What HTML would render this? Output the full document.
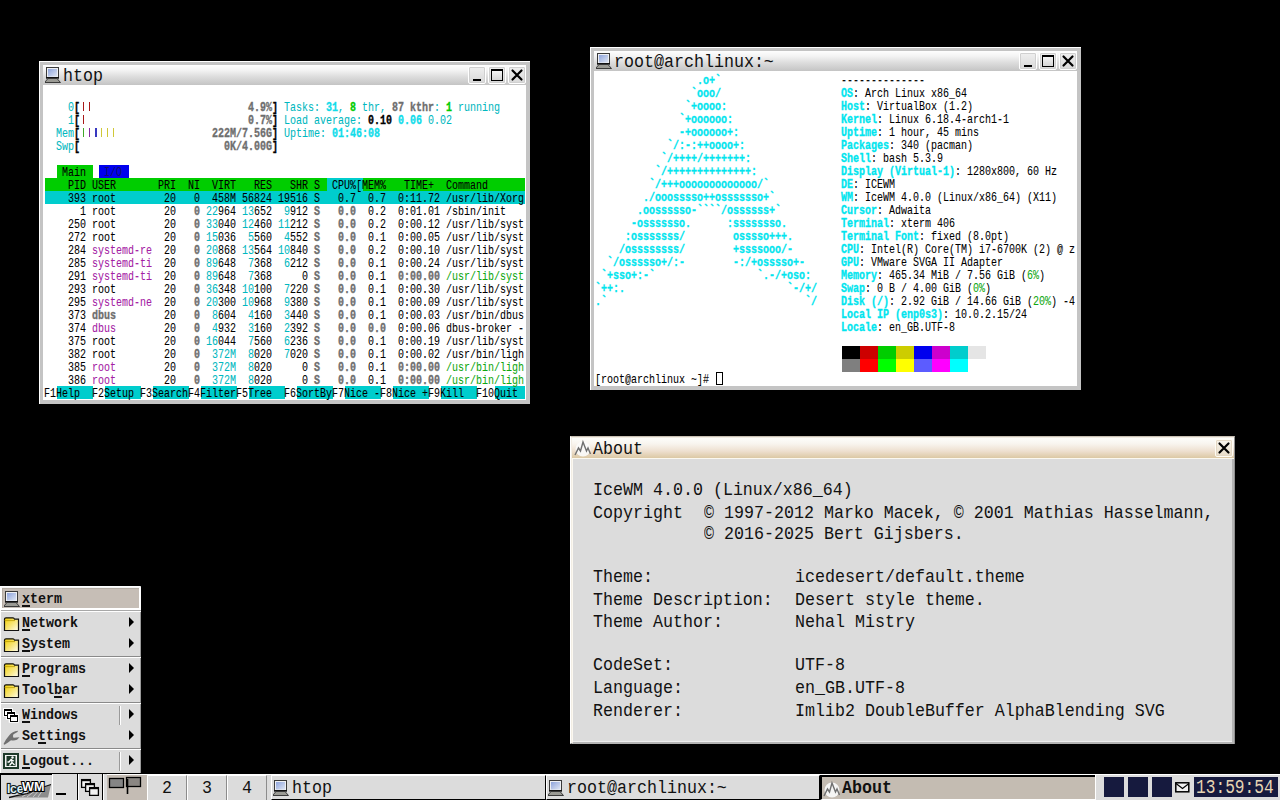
<!DOCTYPE html>
<html><head><meta charset="utf-8"><style>
*{margin:0;padding:0;box-sizing:border-box}
html,body{width:1280px;height:800px;overflow:hidden;background:#000}
body{position:relative;font-family:"Liberation Mono",monospace}
.abs{position:absolute}
.term{position:absolute}
.tr{position:absolute;left:0;white-space:pre;font-family:"Liberation Mono",monospace;font-size:13.333px;line-height:13px;height:13px;transform:scaleX(0.75);transform-origin:0 0;color:#000}
.win{position:absolute;background:#c4c4c4;border-top:1px solid #fff;border-left:1px solid #fff}
.ttl{position:absolute;left:3px;top:3px;height:20px;background:linear-gradient(#fefefe 0%,#f4f4f4 25%,#dcdcdc 60%,#c4c4c4 100%)}
.ttxt{position:absolute;top:2px;white-space:pre;font-family:"Liberation Mono",monospace;font-size:18.5px;line-height:20px;transform:scaleX(0.9);transform-origin:0 0;color:#111}
.cont{position:absolute;left:3px;top:23px;background:#fff;overflow:hidden}
.btn{position:absolute;top:1px;width:18px;height:18px;border:1px solid #fff;border-radius:2px;background:linear-gradient(#f0f0f0,#d8d8d8);box-shadow:inset 0 0 0 1px #d0d0d0}
.mono{white-space:pre;font-family:"Liberation Mono",monospace}
.bg{position:absolute;height:13px}
.tr{top:0;margin-top:1px;margin-left:-0.7px}
.about{position:absolute;left:0;top:0}
.al{position:absolute;left:22px;white-space:pre;font-family:"Liberation Mono",monospace;font-size:18.5px;line-height:20px;transform:scaleX(0.9);transform-origin:0 0;color:#111}
.mi{position:absolute;left:21px;white-space:pre;font-family:"Liberation Mono",monospace;font-weight:bold;font-size:15px;line-height:20px;transform:scaleX(0.889);transform-origin:0 0;color:#111}
.mi u{text-decoration:underline;text-decoration-thickness:2px;text-underline-offset:2px}
.arr{position:absolute;left:128px;width:0;height:0;border-top:5px solid transparent;border-bottom:5px solid transparent;border-left:5.5px solid #000}
.msep{position:absolute;left:0;width:140px;height:2px;border-top:1px solid #8a8a8a;border-bottom:1px solid #fff}
.tb{position:absolute;top:0;height:26px}
.tbt{position:absolute;white-space:pre;font-family:"Liberation Mono",monospace;font-size:18.5px;line-height:20px;transform:scaleX(0.9);transform-origin:0 0;color:#111}
.tr{-webkit-text-stroke:0.08px currentColor}
.dbtn{background:linear-gradient(#f8f4ec,#e8dcc8);box-shadow:inset 0 0 0 1px #e4d8c4;border-color:#fffcf4}

</style></head><body>
<!-- htop window -->
<div class="win" style="left:39px;top:61px;width:491px;height:343px">
  <div class="ttl" style="width:483px">
    <svg width="16" height="16" viewBox="0 0 16 16" style="position:absolute;left:2px;top:2px"><defs><linearGradient id="scrh" x1="0" y1="0" x2="1" y2="1"><stop offset="0" stop-color="#8ea4dc"/><stop offset="1" stop-color="#dfe6f4"/></linearGradient></defs><rect x="1.5" y="0.5" width="12" height="10.5" fill="#eef0f4" stroke="#3a3a3a"/><rect x="3" y="2" width="9" height="7.5" fill="url(#scrh)"/><rect x="1" y="10" width="13" height="1.5" fill="#111"/><polygon points="3,11.5 12,11.5 15.5,15.5 -0.5,15.5" fill="#9a9a94" stroke="#3a3a3a" stroke-width="1"/></svg>
    <div class="ttxt" style="left:20px">htop</div>
    <div class="btn" style="left:425px"><div class="abs" style="left:4px;top:12px;width:8px;height:2px;background:#000"></div></div><div class="btn" style="left:445px"><div class="abs" style="left:2px;top:2px;width:12px;height:12px;border:1.5px solid #000;border-top-width:2.5px;background:linear-gradient(#f4f4f4,#d4d4d4)"></div></div><div class="btn" style="left:465px"><svg width="16" height="16" style="position:absolute;left:0;top:0"><path d="M3.5,3.5 L12.5,12.5 M12.5,3.5 L3.5,12.5" stroke="#000" stroke-width="2.2" stroke-linecap="round"/></svg></div>
  </div>
  <div class="cont" style="width:483px;height:315px"><div class="term" style="left:2px;top:2px"><div class="bg" style="left:38px;top:15px;width:1px;height:9px;background:#a81818"></div><div class="bg" style="left:44px;top:15px;width:1px;height:9px;background:#a81818"></div><div class="bg" style="left:38px;top:28px;width:1px;height:9px;background:#a81818"></div><div class="bg" style="left:38px;top:41px;width:1px;height:9px;background:#40a828"></div><div class="bg" style="left:44px;top:41px;width:1px;height:9px;background:#8828a0"></div><div class="bg" style="left:50px;top:41px;width:2px;height:9px;background:#3838c0"></div><div class="bg" style="left:56px;top:41px;width:1px;height:9px;background:#d0c838"></div><div class="bg" style="left:62px;top:41px;width:1px;height:9px;background:#d0c838"></div><div class="bg" style="left:68px;top:41px;width:1px;height:9px;background:#d0c838"></div><div class="bg" style="left:12px;top:78px;width:36px;background:#00cd00"></div><div class="bg" style="left:54px;top:78px;width:30px;background:#0000ee"></div><div class="bg" style="left:0px;top:91px;width:282px;background:#00cd00"></div><div class="bg" style="left:282px;top:91px;width:36px;background:#00cdcd"></div><div class="bg" style="left:318px;top:91px;width:162px;background:#00cd00"></div><div class="bg" style="left:0px;top:104px;width:480px;background:#00cdcd"></div><div class="bg" style="left:12px;top:299px;width:36px;background:#00cdcd"></div><div class="bg" style="left:60px;top:299px;width:36px;background:#00cdcd"></div><div class="bg" style="left:108px;top:299px;width:36px;background:#00cdcd"></div><div class="bg" style="left:156px;top:299px;width:36px;background:#00cdcd"></div><div class="bg" style="left:204px;top:299px;width:36px;background:#00cdcd"></div><div class="bg" style="left:252px;top:299px;width:36px;background:#00cdcd"></div><div class="bg" style="left:300px;top:299px;width:36px;background:#00cdcd"></div><div class="bg" style="left:348px;top:299px;width:36px;background:#00cdcd"></div><div class="bg" style="left:396px;top:299px;width:36px;background:#00cdcd"></div><div class="bg" style="left:450px;top:299px;width:30px;background:#00cdcd"></div><div class="tr" style="top:13px"><span style="color:#00b8c0">    0</span><span style="font-weight:bold;-webkit-text-stroke:0.35px currentColor">[</span>                            <span style="color:#6e6e6e;font-weight:bold;-webkit-text-stroke:0.35px currentColor">4.9%</span><span style="font-weight:bold;-webkit-text-stroke:0.35px currentColor">]</span><span style="color:#00b8c0"> Tasks: </span><span style="color:#10dcea;font-weight:bold;-webkit-text-stroke:0.35px currentColor">31</span><span style="color:#00b8c0">, </span><span style="color:#00cd00;font-weight:bold;-webkit-text-stroke:0.35px currentColor">8</span><span style="color:#00b8c0"> thr, </span><span style="color:#6e6e6e;font-weight:bold;-webkit-text-stroke:0.35px currentColor">87 kthr</span><span style="color:#00b8c0">: </span><span style="color:#00cd00;font-weight:bold;-webkit-text-stroke:0.35px currentColor">1</span><span style="color:#00b8c0"> running</span></div><div class="tr" style="top:26px"><span style="color:#00b8c0">    1</span><span style="font-weight:bold;-webkit-text-stroke:0.35px currentColor">[</span>                            <span style="color:#6e6e6e;font-weight:bold;-webkit-text-stroke:0.35px currentColor">0.7%</span><span style="font-weight:bold;-webkit-text-stroke:0.35px currentColor">]</span><span style="color:#00b8c0"> Load average: </span><span style="font-weight:bold;-webkit-text-stroke:0.35px currentColor">0.10 </span><span style="color:#10dcea;font-weight:bold;-webkit-text-stroke:0.35px currentColor">0.06 </span><span style="color:#00b8c0">0.02</span></div><div class="tr" style="top:39px"><span style="color:#00b8c0">  Mem</span><span style="font-weight:bold;-webkit-text-stroke:0.35px currentColor">[</span>                      <span style="color:#6e6e6e;font-weight:bold;-webkit-text-stroke:0.35px currentColor">222M/7.56G</span><span style="font-weight:bold;-webkit-text-stroke:0.35px currentColor">]</span><span style="color:#00b8c0"> Uptime: </span><span style="color:#10dcea;font-weight:bold;-webkit-text-stroke:0.35px currentColor">01:46:08</span></div><div class="tr" style="top:52px"><span style="color:#00b8c0">  Swp</span><span style="font-weight:bold;-webkit-text-stroke:0.35px currentColor">[</span>                        <span style="color:#6e6e6e;font-weight:bold;-webkit-text-stroke:0.35px currentColor">0K/4.00G</span><span style="font-weight:bold;-webkit-text-stroke:0.35px currentColor">]</span></div><div class="tr" style="top:78px">   Main  <span style="color:#101070"> I/O </span></div><div class="tr" style="top:91px">    PID USER       PRI  NI  VIRT   RES   SHR S  CPU%[MEM%   TIME+  Command      </div><div class="tr" style="top:104px">    393 root        20   0  458M 56824 19516 S   0.7  0.7  0:11.72 /usr/lib/Xorg</div><div class="tr" style="top:117px">      1 root        20 <span style="color:#6e6e6e;font-weight:bold;-webkit-text-stroke:0.35px currentColor">  0</span> <span style="color:#00b8c0">22</span>964 <span style="color:#00b8c0">13</span>652  <span style="color:#00b8c0">9</span>912 <span style="color:#6e6e6e;font-weight:bold;-webkit-text-stroke:0.35px currentColor">S</span> <span style="color:#6e6e6e;font-weight:bold;-webkit-text-stroke:0.35px currentColor">  0.0</span>  0.2  0:01.01 /sbin/init</div><div class="tr" style="top:130px">    250 root        20 <span style="color:#6e6e6e;font-weight:bold;-webkit-text-stroke:0.35px currentColor">  0</span> <span style="color:#00b8c0">33</span>040 <span style="color:#00b8c0">12</span>460 <span style="color:#00b8c0">11</span>212 <span style="color:#6e6e6e;font-weight:bold;-webkit-text-stroke:0.35px currentColor">S</span> <span style="color:#6e6e6e;font-weight:bold;-webkit-text-stroke:0.35px currentColor">  0.0</span>  0.2  0:00.12 /usr/lib/syst</div><div class="tr" style="top:143px">    272 root        20 <span style="color:#6e6e6e;font-weight:bold;-webkit-text-stroke:0.35px currentColor">  0</span> <span style="color:#00b8c0">15</span>036  <span style="color:#00b8c0">5</span>560  <span style="color:#00b8c0">4</span>552 <span style="color:#6e6e6e;font-weight:bold;-webkit-text-stroke:0.35px currentColor">S</span> <span style="color:#6e6e6e;font-weight:bold;-webkit-text-stroke:0.35px currentColor">  0.0</span>  0.1  0:00.05 /usr/lib/syst</div><div class="tr" style="top:156px">    284 <span style="color:#a420a4">systemd-re</span>  20 <span style="color:#6e6e6e;font-weight:bold;-webkit-text-stroke:0.35px currentColor">  0</span> <span style="color:#00b8c0">20</span>868 <span style="color:#00b8c0">13</span>564 <span style="color:#00b8c0">10</span>840 <span style="color:#6e6e6e;font-weight:bold;-webkit-text-stroke:0.35px currentColor">S</span> <span style="color:#6e6e6e;font-weight:bold;-webkit-text-stroke:0.35px currentColor">  0.0</span>  0.2  0:00.10 /usr/lib/syst</div><div class="tr" style="top:169px">    285 <span style="color:#a420a4">systemd-ti</span>  20 <span style="color:#6e6e6e;font-weight:bold;-webkit-text-stroke:0.35px currentColor">  0</span> <span style="color:#00b8c0">89</span>648  <span style="color:#00b8c0">7</span>368  <span style="color:#00b8c0">6</span>212 <span style="color:#6e6e6e;font-weight:bold;-webkit-text-stroke:0.35px currentColor">S</span> <span style="color:#6e6e6e;font-weight:bold;-webkit-text-stroke:0.35px currentColor">  0.0</span>  0.1  0:00.24 /usr/lib/syst</div><div class="tr" style="top:182px">    291 <span style="color:#a420a4">systemd-ti</span>  20 <span style="color:#6e6e6e;font-weight:bold;-webkit-text-stroke:0.35px currentColor">  0</span> <span style="color:#00b8c0">89</span>648  <span style="color:#00b8c0">7</span>368     0 <span style="color:#6e6e6e;font-weight:bold;-webkit-text-stroke:0.35px currentColor">S</span> <span style="color:#6e6e6e;font-weight:bold;-webkit-text-stroke:0.35px currentColor">  0.0</span>  0.1 <span style="color:#6e6e6e;font-weight:bold;-webkit-text-stroke:0.35px currentColor"> 0:00.00</span> <span style="color:#10a810">/usr/lib/syst</span></div><div class="tr" style="top:195px">    293 root        20 <span style="color:#6e6e6e;font-weight:bold;-webkit-text-stroke:0.35px currentColor">  0</span> <span style="color:#00b8c0">36</span>348 <span style="color:#00b8c0">10</span>100  <span style="color:#00b8c0">7</span>220 <span style="color:#6e6e6e;font-weight:bold;-webkit-text-stroke:0.35px currentColor">S</span> <span style="color:#6e6e6e;font-weight:bold;-webkit-text-stroke:0.35px currentColor">  0.0</span>  0.1  0:00.30 /usr/lib/syst</div><div class="tr" style="top:208px">    295 <span style="color:#a420a4">systemd-ne</span>  20 <span style="color:#6e6e6e;font-weight:bold;-webkit-text-stroke:0.35px currentColor">  0</span> <span style="color:#00b8c0">20</span>300 <span style="color:#00b8c0">10</span>968  <span style="color:#00b8c0">9</span>380 <span style="color:#6e6e6e;font-weight:bold;-webkit-text-stroke:0.35px currentColor">S</span> <span style="color:#6e6e6e;font-weight:bold;-webkit-text-stroke:0.35px currentColor">  0.0</span>  0.1  0:00.09 /usr/lib/syst</div><div class="tr" style="top:221px">    373 <span style="color:#6e6e6e;font-weight:bold;-webkit-text-stroke:0.35px currentColor">dbus      </span>  20 <span style="color:#6e6e6e;font-weight:bold;-webkit-text-stroke:0.35px currentColor">  0</span>  <span style="color:#00b8c0">8</span>604  <span style="color:#00b8c0">4</span>160  <span style="color:#00b8c0">3</span>440 <span style="color:#6e6e6e;font-weight:bold;-webkit-text-stroke:0.35px currentColor">S</span> <span style="color:#6e6e6e;font-weight:bold;-webkit-text-stroke:0.35px currentColor">  0.0</span>  0.1  0:00.03 /usr/bin/dbus</div><div class="tr" style="top:234px">    374 <span style="color:#a420a4">dbus      </span>  20 <span style="color:#6e6e6e;font-weight:bold;-webkit-text-stroke:0.35px currentColor">  0</span>  <span style="color:#00b8c0">4</span>932  <span style="color:#00b8c0">3</span>160  <span style="color:#00b8c0">2</span>392 <span style="color:#6e6e6e;font-weight:bold;-webkit-text-stroke:0.35px currentColor">S</span> <span style="color:#6e6e6e;font-weight:bold;-webkit-text-stroke:0.35px currentColor">  0.0</span> <span style="color:#6e6e6e;font-weight:bold;-webkit-text-stroke:0.35px currentColor"> 0.0</span>  0:00.06 dbus-broker -</div><div class="tr" style="top:247px">    375 root        20 <span style="color:#6e6e6e;font-weight:bold;-webkit-text-stroke:0.35px currentColor">  0</span> <span style="color:#00b8c0">16</span>044  <span style="color:#00b8c0">7</span>560  <span style="color:#00b8c0">6</span>236 <span style="color:#6e6e6e;font-weight:bold;-webkit-text-stroke:0.35px currentColor">S</span> <span style="color:#6e6e6e;font-weight:bold;-webkit-text-stroke:0.35px currentColor">  0.0</span>  0.1  0:00.19 /usr/lib/syst</div><div class="tr" style="top:260px">    382 root        20 <span style="color:#6e6e6e;font-weight:bold;-webkit-text-stroke:0.35px currentColor">  0</span>  <span style="color:#00b8c0">372M</span>  <span style="color:#00b8c0">8</span>020  <span style="color:#00b8c0">7</span>020 <span style="color:#6e6e6e;font-weight:bold;-webkit-text-stroke:0.35px currentColor">S</span> <span style="color:#6e6e6e;font-weight:bold;-webkit-text-stroke:0.35px currentColor">  0.0</span>  0.1  0:00.02 /usr/bin/ligh</div><div class="tr" style="top:273px">    385 <span style="color:#a420a4">root      </span>  20 <span style="color:#6e6e6e;font-weight:bold;-webkit-text-stroke:0.35px currentColor">  0</span>  <span style="color:#00b8c0">372M</span>  <span style="color:#00b8c0">8</span>020     0 <span style="color:#6e6e6e;font-weight:bold;-webkit-text-stroke:0.35px currentColor">S</span> <span style="color:#6e6e6e;font-weight:bold;-webkit-text-stroke:0.35px currentColor">  0.0</span>  0.1 <span style="color:#6e6e6e;font-weight:bold;-webkit-text-stroke:0.35px currentColor"> 0:00.00</span> <span style="color:#10a810">/usr/bin/ligh</span></div><div class="tr" style="top:286px">    386 <span style="color:#a420a4">root      </span>  20 <span style="color:#6e6e6e;font-weight:bold;-webkit-text-stroke:0.35px currentColor">  0</span>  <span style="color:#00b8c0">372M</span>  <span style="color:#00b8c0">8</span>020     0 <span style="color:#6e6e6e;font-weight:bold;-webkit-text-stroke:0.35px currentColor">S</span> <span style="color:#6e6e6e;font-weight:bold;-webkit-text-stroke:0.35px currentColor">  0.0</span>  0.1 <span style="color:#6e6e6e;font-weight:bold;-webkit-text-stroke:0.35px currentColor"> 0:00.00</span> <span style="color:#10a810">/usr/bin/ligh</span></div><div class="tr" style="top:299px">F1Help  F2Setup F3SearchF4FilterF5Tree  F6SortByF7Nice -F8Nice +F9Kill  F10Quit </div></div></div>
</div>
<!-- xterm window -->
<div class="win" style="left:590px;top:47px;width:491px;height:343px">
  <div class="ttl" style="width:483px">
    <svg width="16" height="16" viewBox="0 0 16 16" style="position:absolute;left:2px;top:2px"><defs><linearGradient id="scrx" x1="0" y1="0" x2="1" y2="1"><stop offset="0" stop-color="#8ea4dc"/><stop offset="1" stop-color="#dfe6f4"/></linearGradient></defs><rect x="1.5" y="0.5" width="12" height="10.5" fill="#eef0f4" stroke="#3a3a3a"/><rect x="3" y="2" width="9" height="7.5" fill="url(#scrx)"/><rect x="1" y="10" width="13" height="1.5" fill="#111"/><polygon points="3,11.5 12,11.5 15.5,15.5 -0.5,15.5" fill="#9a9a94" stroke="#3a3a3a" stroke-width="1"/></svg>
    <div class="ttxt" style="left:20px">root@archlinux:~</div>
    <div class="btn" style="left:425px"><div class="abs" style="left:4px;top:12px;width:8px;height:2px;background:#000"></div></div><div class="btn" style="left:445px"><div class="abs" style="left:2px;top:2px;width:12px;height:12px;border:1.5px solid #000;border-top-width:2.5px;background:linear-gradient(#f4f4f4,#d4d4d4)"></div></div><div class="btn" style="left:465px"><svg width="16" height="16" style="position:absolute;left:0;top:0"><path d="M3.5,3.5 L12.5,12.5 M12.5,3.5 L3.5,12.5" stroke="#000" stroke-width="2.2" stroke-linecap="round"/></svg></div>
  </div>
  <div class="cont" style="width:483px;height:315px"><div class="term" style="left:2px;top:2px"><div class="bg" style="left:246px;top:273px;width:18px;background:#000000"></div><div class="bg" style="left:264px;top:273px;width:18px;background:#cd0000"></div><div class="bg" style="left:282px;top:273px;width:18px;background:#00cd00"></div><div class="bg" style="left:300px;top:273px;width:18px;background:#cdcd00"></div><div class="bg" style="left:318px;top:273px;width:18px;background:#0000ee"></div><div class="bg" style="left:336px;top:273px;width:18px;background:#cd00cd"></div><div class="bg" style="left:354px;top:273px;width:18px;background:#00cdcd"></div><div class="bg" style="left:372px;top:273px;width:18px;background:#e5e5e5"></div><div class="bg" style="left:246px;top:286px;width:18px;background:#7f7f7f"></div><div class="bg" style="left:264px;top:286px;width:18px;background:#ff0000"></div><div class="bg" style="left:282px;top:286px;width:18px;background:#00ff00"></div><div class="bg" style="left:300px;top:286px;width:18px;background:#ffff00"></div><div class="bg" style="left:318px;top:286px;width:18px;background:#5c5cff"></div><div class="bg" style="left:336px;top:286px;width:18px;background:#ff00ff"></div><div class="bg" style="left:354px;top:286px;width:18px;background:#00ffff"></div><div class="bg" style="left:372px;top:286px;width:18px;background:#ffffff"></div><div class="tr" style="top:0px"><span style="color:#00e5ee;font-weight:bold;-webkit-text-stroke:0.35px currentColor">                 .o+`                    </span>--------------</div><div class="tr" style="top:13px"><span style="color:#00e5ee;font-weight:bold;-webkit-text-stroke:0.35px currentColor">                `ooo/                    </span><span style="color:#00e5ee;font-weight:bold;-webkit-text-stroke:0.35px currentColor">OS</span>: Arch Linux x86_64</div><div class="tr" style="top:26px"><span style="color:#00e5ee;font-weight:bold;-webkit-text-stroke:0.35px currentColor">               `+oooo:                   </span><span style="color:#00e5ee;font-weight:bold;-webkit-text-stroke:0.35px currentColor">Host</span>: VirtualBox (1.2)</div><div class="tr" style="top:39px"><span style="color:#00e5ee;font-weight:bold;-webkit-text-stroke:0.35px currentColor">              `+oooooo:                  </span><span style="color:#00e5ee;font-weight:bold;-webkit-text-stroke:0.35px currentColor">Kernel</span>: Linux 6.18.4-arch1-1</div><div class="tr" style="top:52px"><span style="color:#00e5ee;font-weight:bold;-webkit-text-stroke:0.35px currentColor">              -+oooooo+:                 </span><span style="color:#00e5ee;font-weight:bold;-webkit-text-stroke:0.35px currentColor">Uptime</span>: 1 hour, 45 mins</div><div class="tr" style="top:65px"><span style="color:#00e5ee;font-weight:bold;-webkit-text-stroke:0.35px currentColor">            `/:-:++oooo+:                </span><span style="color:#00e5ee;font-weight:bold;-webkit-text-stroke:0.35px currentColor">Packages</span>: 340 (pacman)</div><div class="tr" style="top:78px"><span style="color:#00e5ee;font-weight:bold;-webkit-text-stroke:0.35px currentColor">           `/++++/+++++++:               </span><span style="color:#00e5ee;font-weight:bold;-webkit-text-stroke:0.35px currentColor">Shell</span>: bash 5.3.9</div><div class="tr" style="top:91px"><span style="color:#00e5ee;font-weight:bold;-webkit-text-stroke:0.35px currentColor">          `/++++++++++++++:              </span><span style="color:#00e5ee;font-weight:bold;-webkit-text-stroke:0.35px currentColor">Display (Virtual-1)</span>: 1280x800, 60 Hz</div><div class="tr" style="top:104px"><span style="color:#00e5ee;font-weight:bold;-webkit-text-stroke:0.35px currentColor">         `/+++ooooooooooooo/`            </span><span style="color:#00e5ee;font-weight:bold;-webkit-text-stroke:0.35px currentColor">DE</span>: ICEWM</div><div class="tr" style="top:117px"><span style="color:#00e5ee;font-weight:bold;-webkit-text-stroke:0.35px currentColor">        ./ooosssso++osssssso+`           </span><span style="color:#00e5ee;font-weight:bold;-webkit-text-stroke:0.35px currentColor">WM</span>: IceWM 4.0.0 (Linux/x86_64) (X11)</div><div class="tr" style="top:130px"><span style="color:#00e5ee;font-weight:bold;-webkit-text-stroke:0.35px currentColor">       .oossssso-````/ossssss+`          </span><span style="color:#00e5ee;font-weight:bold;-webkit-text-stroke:0.35px currentColor">Cursor</span>: Adwaita</div><div class="tr" style="top:143px"><span style="color:#00e5ee;font-weight:bold;-webkit-text-stroke:0.35px currentColor">      -osssssso.      :ssssssso.         </span><span style="color:#00e5ee;font-weight:bold;-webkit-text-stroke:0.35px currentColor">Terminal</span>: xterm 406</div><div class="tr" style="top:156px"><span style="color:#00e5ee;font-weight:bold;-webkit-text-stroke:0.35px currentColor">     :osssssss/        osssso+++.        </span><span style="color:#00e5ee;font-weight:bold;-webkit-text-stroke:0.35px currentColor">Terminal Font</span>: fixed (8.0pt)</div><div class="tr" style="top:169px"><span style="color:#00e5ee;font-weight:bold;-webkit-text-stroke:0.35px currentColor">    /ossssssss/        +ssssooo/-        </span><span style="color:#00e5ee;font-weight:bold;-webkit-text-stroke:0.35px currentColor">CPU</span>: Intel(R) Core(TM) i7-6700K (2) @ z</div><div class="tr" style="top:182px"><span style="color:#00e5ee;font-weight:bold;-webkit-text-stroke:0.35px currentColor">  `/ossssso+/:-        -:/+osssso+-      </span><span style="color:#00e5ee;font-weight:bold;-webkit-text-stroke:0.35px currentColor">GPU</span>: VMware SVGA II Adapter</div><div class="tr" style="top:195px"><span style="color:#00e5ee;font-weight:bold;-webkit-text-stroke:0.35px currentColor"> `+sso+:-`                 `.-/+oso:     </span><span style="color:#00e5ee;font-weight:bold;-webkit-text-stroke:0.35px currentColor">Memory</span>: 465.34 MiB / 7.56 GiB (<span style="color:#10a810">6%</span>)</div><div class="tr" style="top:208px"><span style="color:#00e5ee;font-weight:bold;-webkit-text-stroke:0.35px currentColor">`++:.                           `-/+/    </span><span style="color:#00e5ee;font-weight:bold;-webkit-text-stroke:0.35px currentColor">Swap</span>: 0 B / 4.00 GiB (<span style="color:#10a810">0%</span>)</div><div class="tr" style="top:221px"><span style="color:#00e5ee;font-weight:bold;-webkit-text-stroke:0.35px currentColor">.`                                 `/    </span><span style="color:#00e5ee;font-weight:bold;-webkit-text-stroke:0.35px currentColor">Disk (/)</span>: 2.92 GiB / 14.66 GiB (<span style="color:#10a810">20%</span>) -4</div><div class="tr" style="top:234px">                                         <span style="color:#00e5ee;font-weight:bold;-webkit-text-stroke:0.35px currentColor">Local IP (enp0s3)</span>: 10.0.2.15/24</div><div class="tr" style="top:247px">                                         <span style="color:#00e5ee;font-weight:bold;-webkit-text-stroke:0.35px currentColor">Locale</span>: en_GB.UTF-8</div><div class="tr" style="top:273px">                                                                 </div><div class="tr" style="top:286px">                                                                 </div><div class="tr" style="top:299px">[root@archlinux ~]# </div><div class="bg" style="left:120px;top:299px;width:7px;height:13px;border:1px solid #000"></div></div></div>
</div>
<!-- About window -->
<div class="abs" style="left:570px;top:436px;width:665px;height:308px;background:#f2ede4;border-top:1px solid #c8c0b4;border-left:1px solid #fff;border-right:1px solid #909090;border-bottom:1px solid #909090">
  <div class="abs" style="left:1px;top:1px;width:662px;height:20px;background:linear-gradient(#fdfdfb 0%,#f8f4ee 30%,#eee0d0 65%,#dcc8a4 100%)">
    <svg width="18" height="18" viewBox="0 0 18 18" style="position:absolute;left:2px;top:1px"><circle cx="9" cy="10" r="7.5" fill="#fbfbfb" opacity="0.9"/><polyline points="1,16 4.5,9 6.5,12 9,3 12.5,12 14,9 16.5,15" fill="none" stroke="#707070" stroke-width="1.4"/></svg>
    <div class="ttxt" style="left:21px">About</div>
    <div class="btn dbtn" style="left:643px;top:1px"><svg width="16" height="16" style="position:absolute;left:0;top:0"><path d="M3.5,3.5 L12.5,12.5 M12.5,3.5 L3.5,12.5" stroke="#000" stroke-width="2.2" stroke-linecap="round"/></svg></div>
  </div>
  <div class="abs" style="left:1px;top:21px;width:662px;height:1px;background:#fbf8f0"></div>
  <div class="abs" style="left:1px;top:22px;width:662px;height:285px;background:#dcdcdc;border-left:1px solid #fbf8f0;border-right:2px solid #b4b4b4;border-bottom:2px solid #b4b4b4;box-shadow:inset 0 -1px 0 #ececec"></div>
  <div class="about"><div class="al" style="top:44px">IceWM 4.0.0 (Linux/x86_64)</div><div class="al" style="top:67px">Copyright  </div><div class="al" style="top:67px;left:133px">© 1997-2012 Marko Macek, © 2001 Mathias Hasselmann,</div><div class="al" style="top:88px;left:133px">© 2016-2025 Bert Gijsbers.</div><div class="al" style="top:131px">Theme:</div><div class="al" style="top:131px;left:224px">icedesert/default.theme</div><div class="al" style="top:154px">Theme Description:</div><div class="al" style="top:154px;left:224px">Desert style theme.</div><div class="al" style="top:176px">Theme Author:</div><div class="al" style="top:176px;left:224px">Nehal Mistry</div><div class="al" style="top:219px">CodeSet:</div><div class="al" style="top:219px;left:224px">UTF-8</div><div class="al" style="top:242px">Language:</div><div class="al" style="top:242px;left:224px">en_GB.UTF-8</div><div class="al" style="top:265px">Renderer:</div><div class="al" style="top:265px;left:224px">Imlib2 DoubleBuffer AlphaBlending SVG</div>
  </div>
</div>
<!-- start menu -->
<div class="abs" style="left:0;top:586px;width:141px;height:187px;background:#dcdcdc;border-top:1px solid #fff;border-left:1px solid #fff;border-right:1px solid #9a9a9a">
  <div class="abs" style="left:0;top:0;width:140px;height:23px;background:#c6beb6;border-style:solid;border-color:#f4f4f4 #fff #fff #fff;border-width:1px 2px 2px 1px;box-shadow:inset 1px 1px 0 #b4aca4"></div><div class="abs" style="left:0;top:23px;width:140px;height:2px;border-top:1px solid #a8a8a8;border-bottom:1px solid #fff"></div>
  <div class="mi" style="top:3px"><u>x</u>term</div><svg width="16" height="16" viewBox="0 0 16 16" style="position:absolute;left:3px;top:4px"><defs><linearGradient id="scrm" x1="0" y1="0" x2="1" y2="1"><stop offset="0" stop-color="#8ea4dc"/><stop offset="1" stop-color="#dfe6f4"/></linearGradient></defs><rect x="1.5" y="0.5" width="12" height="10.5" fill="#eef0f4" stroke="#3a3a3a"/><rect x="3" y="2" width="9" height="7.5" fill="url(#scrm)"/><rect x="1" y="10" width="13" height="1.5" fill="#111"/><polygon points="3,11.5 12,11.5 15.5,15.5 -0.5,15.5" fill="#9a9a94" stroke="#3a3a3a" stroke-width="1"/></svg><div class="mi" style="top:27px"><u>N</u>etwork</div><svg width="17" height="15" viewBox="0 0 17 15" style="position:absolute;left:2px;top:30px"><defs><linearGradient id="fgn" x1="0" y1="0" x2="1" y2="1"><stop offset="0" stop-color="#f4d000"/><stop offset="0.6" stop-color="#f8e888"/><stop offset="1" stop-color="#fffef0"/></linearGradient></defs><path d="M1.5,3.5 L1.5,2 Q1.5,0.8 3,0.8 L10,0.8 Q11,0.8 11.6,2.2 L15.5,2.2 L15.5,13.5 L1.5,13.5 Z" fill="url(#fgn)" stroke="#111" stroke-width="1.2"/><line x1="1.5" y1="3.6" x2="12" y2="3.6" stroke="#b89a00" stroke-width="0.8"/></svg><div class="arr" style="top:30px"></div><div class="mi" style="top:48px"><u>S</u>ystem</div><svg width="17" height="15" viewBox="0 0 17 15" style="position:absolute;left:2px;top:51px"><defs><linearGradient id="fgs" x1="0" y1="0" x2="1" y2="1"><stop offset="0" stop-color="#f4d000"/><stop offset="0.6" stop-color="#f8e888"/><stop offset="1" stop-color="#fffef0"/></linearGradient></defs><path d="M1.5,3.5 L1.5,2 Q1.5,0.8 3,0.8 L10,0.8 Q11,0.8 11.6,2.2 L15.5,2.2 L15.5,13.5 L1.5,13.5 Z" fill="url(#fgs)" stroke="#111" stroke-width="1.2"/><line x1="1.5" y1="3.6" x2="12" y2="3.6" stroke="#b89a00" stroke-width="0.8"/></svg><div class="arr" style="top:51px"></div><div class="msep" style="top:69px"></div><div class="mi" style="top:73px"><u>P</u>rograms</div><svg width="17" height="15" viewBox="0 0 17 15" style="position:absolute;left:2px;top:76px"><defs><linearGradient id="fgp" x1="0" y1="0" x2="1" y2="1"><stop offset="0" stop-color="#f4d000"/><stop offset="0.6" stop-color="#f8e888"/><stop offset="1" stop-color="#fffef0"/></linearGradient></defs><path d="M1.5,3.5 L1.5,2 Q1.5,0.8 3,0.8 L10,0.8 Q11,0.8 11.6,2.2 L15.5,2.2 L15.5,13.5 L1.5,13.5 Z" fill="url(#fgp)" stroke="#111" stroke-width="1.2"/><line x1="1.5" y1="3.6" x2="12" y2="3.6" stroke="#b89a00" stroke-width="0.8"/></svg><div class="arr" style="top:76px"></div><div class="mi" style="top:94px">Tool<u>b</u>ar</div><svg width="17" height="15" viewBox="0 0 17 15" style="position:absolute;left:2px;top:97px"><defs><linearGradient id="fgt" x1="0" y1="0" x2="1" y2="1"><stop offset="0" stop-color="#f4d000"/><stop offset="0.6" stop-color="#f8e888"/><stop offset="1" stop-color="#fffef0"/></linearGradient></defs><path d="M1.5,3.5 L1.5,2 Q1.5,0.8 3,0.8 L10,0.8 Q11,0.8 11.6,2.2 L15.5,2.2 L15.5,13.5 L1.5,13.5 Z" fill="url(#fgt)" stroke="#111" stroke-width="1.2"/><line x1="1.5" y1="3.6" x2="12" y2="3.6" stroke="#b89a00" stroke-width="0.8"/></svg><div class="arr" style="top:97px"></div><div class="msep" style="top:115px"></div><div class="mi" style="top:119px"><u>W</u>indows</div><svg width="16" height="15" viewBox="0 0 16 15" style="position:absolute;left:2px;top:121px"><rect x="0.5" y="0.5" width="8.5" height="7.5" fill="#fff" stroke="#fff" stroke-width="1.5"/><rect x="3.5" y="3.5" width="8.5" height="7.5" fill="#fff" stroke="#fff" stroke-width="1.5"/><rect x="6.5" y="6.5" width="8.5" height="7.5" fill="#fff" stroke="#fff" stroke-width="1.5"/><rect x="1.5" y="1.5" width="7" height="6" fill="#fff" stroke="#000" stroke-width="1"/><rect x="1" y="1" width="8" height="2" fill="#000"/><rect x="4.5" y="4.5" width="7" height="6" fill="#fff" stroke="#000" stroke-width="1"/><rect x="4" y="4" width="8" height="2" fill="#000"/><rect x="7.5" y="7.5" width="7" height="6" fill="#fff" stroke="#000" stroke-width="1"/><rect x="7" y="7" width="8" height="2" fill="#000"/></svg><div class="arr" style="top:122px"></div><div class="abs" style="left:118px;top:119px;width:2px;height:19px;border-left:1px solid #9a9a9a;border-right:1px solid #fff"></div><div class="mi" style="top:140px">Se<u>t</u>tings</div><svg width="18" height="16" viewBox="0 0 18 16" style="position:absolute;left:2px;top:143px"><path d="M0.5,14 L3,9.5 L6.5,5 Q9,1.5 15,0.7 L14.5,2 L10.5,4.2 Q9.3,5.8 10.5,7.8 L16.5,7.3 L14,9.8 Q11,11 8,10.3 L5,12.5 L1.5,14.8 Z" fill="#707070"/></svg><div class="arr" style="top:143px"></div><div class="msep" style="top:161px"></div><div class="mi" style="top:165px"><u>L</u>ogout...</div><svg width="16" height="16" viewBox="0 0 16 16" style="position:absolute;left:2px;top:166px"><rect x="0" y="0" width="16" height="16" fill="#1e3a2a"/><rect x="2" y="2" width="12" height="12" fill="#f4f4f4"/><rect x="3.5" y="3" width="9" height="10" fill="#1e3a2a"/><circle cx="9.5" cy="4.5" r="1.2" fill="#fff"/><path d="M8.5,6 L6,9 L4.5,9 M8.5,6 L9,9.5 L11.5,12 M9,9.5 L6.5,12.5 M8.5,7 L11,8" stroke="#fff" stroke-width="1.3" fill="none"/></svg><div class="arr" style="top:168px"></div><div class="abs" style="left:118px;top:165px;width:2px;height:19px;border-left:1px solid #9a9a9a;border-right:1px solid #fff"></div>
</div>
<!-- taskbar -->
<div class="abs" style="left:0;top:773px;width:1280px;height:27px;background:#dcdcdc;border-top:1px solid #000">
  <div class="abs" style="left:0px;top:0px;width:1280px;height:1px;background:#fff"></div><div class="abs" style="left:0px;top:0px;width:52px;height:26px;background:#dcdcdc;border-left:1px solid #000;border-top:1px solid #000"></div><svg width="52" height="26" style="position:absolute;left:0;top:0"><polygon points="9,23.5 20,21.5 27,19.6 33,17 39,14 44,13 51,10.5 48,23.5" fill="#8c8c8c"/><path d="M22,23 L30,18 M27,23 L36,16 M33,23 L41,14 M38,23 L45,13" stroke="#c8c8c8" stroke-width="1"/><path d="M9,23.5 Q18,21 27,19.6 Q36,16 42,13.5 L51,10.5" stroke="#111" stroke-width="1.3" fill="none"/><text x="7" y="18.8" font-family="Liberation Sans" font-weight="bold" font-size="12.3" fill="#dcf0f6" stroke="#0c1418" stroke-width="2.2" paint-order="stroke" letter-spacing="-0.3">Ice</text><text x="22" y="16.9" font-family="Liberation Sans" font-weight="bold" font-size="12.6" fill="#fff" stroke="#000" stroke-width="2.2" paint-order="stroke">WM</text></svg><div class="abs" style="left:52px;top:0px;width:26px;height:26px;background:#dcdcdc;border-left:1px solid #fff;border-right:1px solid #000"></div><div class="abs" style="left:56px;top:19px;width:10px;height:2px;background:#000"></div><div class="abs" style="left:78px;top:0px;width:25px;height:26px;background:#dcdcdc;border-left:1px solid #fff;border-right:1px solid #000"></div><svg width="20" height="18" style="position:absolute;left:80px;top:4px"><rect x="1.6" y="1.6" width="8.8" height="7.8" fill="#f2f2f2" stroke="#000" stroke-width="1.3"/><rect x="1" y="1" width="10" height="2.2" fill="#000"/><rect x="5.6" y="5.6" width="8.8" height="7.8" fill="#f2f2f2" stroke="#000" stroke-width="1.3"/><rect x="5" y="5" width="10" height="2.2" fill="#000"/><rect x="9.6" y="9.6" width="8.8" height="7.8" fill="#f2f2f2" stroke="#000" stroke-width="1.3"/><rect x="9" y="9" width="10" height="2.2" fill="#000"/></svg><div class="abs" style="left:103px;top:0px;width:4px;height:26px;background:#dcdcdc;border-left:1px solid #fff"></div><div class="abs" style="left:107px;top:1px;width:40px;height:25px;background:#c4bcb4"></div><svg width="40" height="24" style="position:absolute;left:107px;top:2px"><rect x="2.5" y="2.5" width="14" height="9" fill="#858585" stroke="#000" stroke-width="1.3"/><rect x="19.5" y="1.5" width="14" height="9" fill="#8a8682" stroke="#000" stroke-width="1.3"/><line x1="20.5" y1="3" x2="20.5" y2="18" stroke="#000" stroke-width="1.6"/></svg><div class="abs" style="left:147px;top:1px;width:40px;height:25px;background:#dcdcdc;border-right:1px solid #8c8c8c;border-top:1px solid #fff;border-left:1px solid #fff"></div><div class="tbt" style="left:162px;top:5px">2</div><div class="abs" style="left:187px;top:1px;width:40px;height:25px;background:#dcdcdc;border-right:1px solid #8c8c8c;border-top:1px solid #fff;border-left:1px solid #fff"></div><div class="tbt" style="left:202px;top:5px">3</div><div class="abs" style="left:227px;top:1px;width:40px;height:25px;background:#dcdcdc;border-right:1px solid #8c8c8c;border-top:1px solid #fff;border-left:1px solid #fff"></div><div class="tbt" style="left:242px;top:5px">4</div><div class="abs" style="left:267px;top:1px;width:4px;height:25px;background:#dcdcdc"></div><div class="abs" style="left:271px;top:1px;width:275px;height:25px;background:#dcdcdc;border-left:1px solid #fff;border-top:1px solid #fff;border-right:1px solid #000;border-bottom:1px solid #000"></div><svg width="16" height="16" viewBox="0 0 16 16" style="position:absolute;left:273px;top:6px"><defs><linearGradient id="scrt1" x1="0" y1="0" x2="1" y2="1"><stop offset="0" stop-color="#8ea4dc"/><stop offset="1" stop-color="#dfe6f4"/></linearGradient></defs><rect x="1.5" y="0.5" width="12" height="10.5" fill="#eef0f4" stroke="#3a3a3a"/><rect x="3" y="2" width="9" height="7.5" fill="url(#scrt1)"/><rect x="1" y="10" width="13" height="1.5" fill="#111"/><polygon points="3,11.5 12,11.5 15.5,15.5 -0.5,15.5" fill="#9a9a94" stroke="#3a3a3a" stroke-width="1"/></svg><div class="tbt" style="left:292px;top:5px">htop</div><div class="abs" style="left:546px;top:1px;width:274px;height:25px;background:#dcdcdc;border-left:1px solid #fff;border-top:1px solid #fff;border-right:1px solid #000;border-bottom:1px solid #000"></div><svg width="16" height="16" viewBox="0 0 16 16" style="position:absolute;left:548px;top:6px"><defs><linearGradient id="scrt2" x1="0" y1="0" x2="1" y2="1"><stop offset="0" stop-color="#8ea4dc"/><stop offset="1" stop-color="#dfe6f4"/></linearGradient></defs><rect x="1.5" y="0.5" width="12" height="10.5" fill="#eef0f4" stroke="#3a3a3a"/><rect x="3" y="2" width="9" height="7.5" fill="url(#scrt2)"/><rect x="1" y="10" width="13" height="1.5" fill="#111"/><polygon points="3,11.5 12,11.5 15.5,15.5 -0.5,15.5" fill="#9a9a94" stroke="#3a3a3a" stroke-width="1"/></svg><div class="tbt" style="left:567px;top:5px">root@archlinux:~</div><div class="abs" style="left:820px;top:1px;width:275px;height:25px;background:#c4bcb2;border-left:2px solid #000;border-top:2px solid #000;border-bottom:1px solid #fff"></div><svg width="18" height="18" viewBox="0 0 18 18" style="position:absolute;left:823px;top:6px"><circle cx="9" cy="10" r="7.5" fill="#fbfbfb" opacity="0.9"/><polyline points="1,16 4.5,9 6.5,12 9,3 12.5,12 14,9 16.5,15" fill="none" stroke="#707070" stroke-width="1.4"/></svg><div class="tbt" style="left:842px;top:5px;font-weight:bold">About</div><div class="abs" style="left:1095px;top:1px;width:185px;height:25px;background:#dcdcdc;border-left:1px solid #fff"></div><div class="abs" style="left:1104px;top:3px;width:20px;height:20px;background:#161a3e"></div><div class="abs" style="left:1128px;top:3px;width:20px;height:20px;background:#161a3e"></div><div class="abs" style="left:1152px;top:3px;width:20px;height:20px;background:#161a3e"></div><svg width="15" height="11" style="position:absolute;left:1175px;top:8px"><rect x="0.8" y="0.8" width="13" height="9" fill="#f0f0f0" stroke="#000" stroke-width="1.5"/><path d="M1,1.5 L7.5,6.5 L14,1.5" stroke="#000" stroke-width="1.2" fill="none"/></svg><div class="abs" style="left:1194px;top:3px;width:84px;height:20px;background:#161a3e"></div><div class="tbt" style="left:1196px;top:4px;color:#e6d6b4;font-size:19.5px;transform:scaleX(0.83)">13:59:54</div>
</div>

</body></html>
